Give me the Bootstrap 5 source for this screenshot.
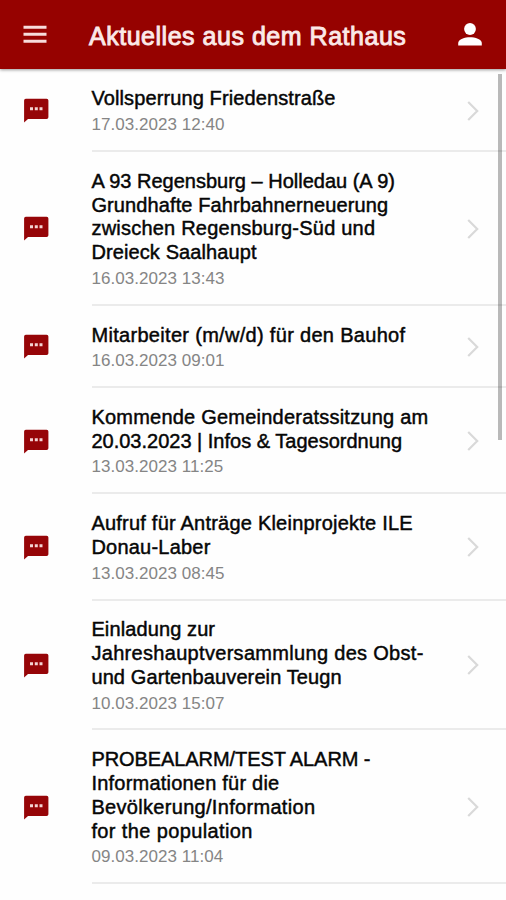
<!DOCTYPE html>
<html lang="de">
<head>
<meta charset="utf-8">
<meta name="viewport" content="width=device-width, initial-scale=1">
<title>Aktuelles aus dem Rathaus</title>
<link href="https://cdn.jsdelivr.net/npm/bootstrap@5.3.0/dist/css/bootstrap.min.css" rel="stylesheet">
<style>
body{font-family:"Liberation Sans",Arial,sans-serif;height:900px;overflow:hidden;background:#fefefe}
.topbar{height:69px;background:#960200;box-shadow:0 1px 3px rgba(0,0,0,.4);padding:3px 24px 0 23px;z-index:2}
.topbar h1{font-size:25px;line-height:30px;font-weight:400;color:#fbe9e8;-webkit-text-stroke:.9px #fbe9e8;letter-spacing:.52px;margin-left:42px}
.news{padding:.6px 0 0 24px}
.bubble{width:25px;flex:none;margin-right:43px}
.news-body{padding:17.8px 0 12.9px;border-bottom:2px solid #ebebeb}
.news-text{margin-left:-.6px}
.headline{font-size:20px;line-height:23.75px;color:#060606;-webkit-text-stroke:.45px #060606;white-space:nowrap}
.t0{letter-spacing:-.08px}
.t1{letter-spacing:.11px}
.t2{letter-spacing:.22px}
.t3{letter-spacing:.31px}
.t4{letter-spacing:.38px}
.stamp{font-size:17px;line-height:24px;padding-top:2px;color:#858585;letter-spacing:.05px}
.chev{margin-right:27.5px;margin-top:-3px}
.scroll-thumb{position:absolute;left:498px;top:74px;width:4px;height:366px;background:rgba(0,0,0,.27);z-index:3}
</style>
<script src="https://cdn.jsdelivr.net/npm/bootstrap@5.3.0/dist/js/bootstrap.bundle.min.js"></script>
</head>
<body>
<svg class="d-none" xmlns="http://www.w3.org/2000/svg">
<symbol id="bubble" viewBox="0 0 25 25"><path d="M1.8 .8h20.8a1.8 1.8 0 0 1 1.8 1.8v16.6a1.8 1.8 0 0 1-1.8 1.8H4L.1 24.6V2.6A1.8 1.8 0 0 1 1.8 .8z" fill="#960508"/><path d="M6 9.3h3v3H6zM10.8 9.3h3v3h-3zM15.5 9.3h3v3h-3z" fill="#f3d3d3"/></symbol>
<symbol id="chev" viewBox="0 0 12 20"><path d="M1.2 1l9 9-9 9" fill="none" stroke="#d9d9d9" stroke-width="2.2"/></symbol>
</svg>
<header class="topbar d-flex align-items-center position-relative">
<svg width="24" height="18" viewBox="0 0 24 18" class="mb-1"><path d="M.5 2.3h23M.5 9.3h23M.5 16.3h23" stroke="#f7dcdb" stroke-width="3"/></svg>
<h1 class="mb-0 flex-grow-1 text-nowrap">Aktuelles aus dem Rathaus</h1>
<svg width="24" height="24" viewBox="0 0 24 24" class="mb-1"><circle cx="12" cy="7" r="5.9" fill="#fff"/><path d="M.2 23.6v-2.6C.2 17 7 15.2 12 15.2s11.8 1.8 11.8 5.8v2.6z" fill="#fff"/></svg>
</header>
<div class="scroll-thumb"></div>
<main class="news">
<article class="d-flex align-items-center"><svg class="bubble" height="25"><use href="#bubble"/></svg><div class="news-body d-flex align-items-center flex-grow-1"><div class="news-text flex-grow-1"><div class="headline"><span class="t1">Vollsperrung Friedenstraße</span></div><div class="stamp">17.03.2023 12:40</div></div><svg class="chev" width="12" height="20"><use href="#chev"/></svg></div></article>
<article class="d-flex align-items-center"><svg class="bubble" height="25"><use href="#bubble"/></svg><div class="news-body d-flex align-items-center flex-grow-1"><div class="news-text flex-grow-1"><div class="headline">A 93 Regensburg – Holledau (A 9)<br><span class="t1">Grundhafte Fahrbahnerneuerung</span><br><span class="t2">zwischen Regensburg-Süd und</span><br><span class="t1">Dreieck Saalhaupt</span></div><div class="stamp">16.03.2023 13:43</div></div><svg class="chev" width="12" height="20"><use href="#chev"/></svg></div></article>
<article class="d-flex align-items-center"><svg class="bubble" height="25"><use href="#bubble"/></svg><div class="news-body d-flex align-items-center flex-grow-1"><div class="news-text flex-grow-1"><div class="headline"><span class="t3">Mitarbeiter (m/w/d) für den Bauhof</span></div><div class="stamp">16.03.2023 09:01</div></div><svg class="chev" width="12" height="20"><use href="#chev"/></svg></div></article>
<article class="d-flex align-items-center"><svg class="bubble" height="25"><use href="#bubble"/></svg><div class="news-body d-flex align-items-center flex-grow-1"><div class="news-text flex-grow-1"><div class="headline"><span class="t2">Kommende Gemeinderatssitzung am</span><br>20.03.2023 | Infos &amp; Tagesordnung</div><div class="stamp">13.03.2023 11:25</div></div><svg class="chev" width="12" height="20"><use href="#chev"/></svg></div></article>
<article class="d-flex align-items-center"><svg class="bubble" height="25"><use href="#bubble"/></svg><div class="news-body d-flex align-items-center flex-grow-1"><div class="news-text flex-grow-1"><div class="headline"><span class="t2">Aufruf für Anträge Kleinprojekte ILE<br>Donau-Laber</span></div><div class="stamp">13.03.2023 08:45</div></div><svg class="chev" width="12" height="20"><use href="#chev"/></svg></div></article>
<article class="d-flex align-items-center"><svg class="bubble" height="25"><use href="#bubble"/></svg><div class="news-body d-flex align-items-center flex-grow-1"><div class="news-text flex-grow-1"><div class="headline"><span class="t1">Einladung zur</span><br><span class="t3">Jahreshauptversammlung des Obst-</span><br><span class="t1">und Gartenbauverein Teugn</span></div><div class="stamp">10.03.2023 15:07</div></div><svg class="chev" width="12" height="20"><use href="#chev"/></svg></div></article>
<article class="d-flex align-items-center"><svg class="bubble" height="25"><use href="#bubble"/></svg><div class="news-body d-flex align-items-center flex-grow-1"><div class="news-text flex-grow-1"><div class="headline"><span class="t0">PROBEALARM/TEST ALARM -</span><br><span class="t2">Informationen für die</span><br><span class="t3">Bevölkerung/Information</span><br><span class="t4">for the population</span></div><div class="stamp">09.03.2023 11:04</div></div><svg class="chev" width="12" height="20"><use href="#chev"/></svg></div></article>
</main>
</body>
</html>
